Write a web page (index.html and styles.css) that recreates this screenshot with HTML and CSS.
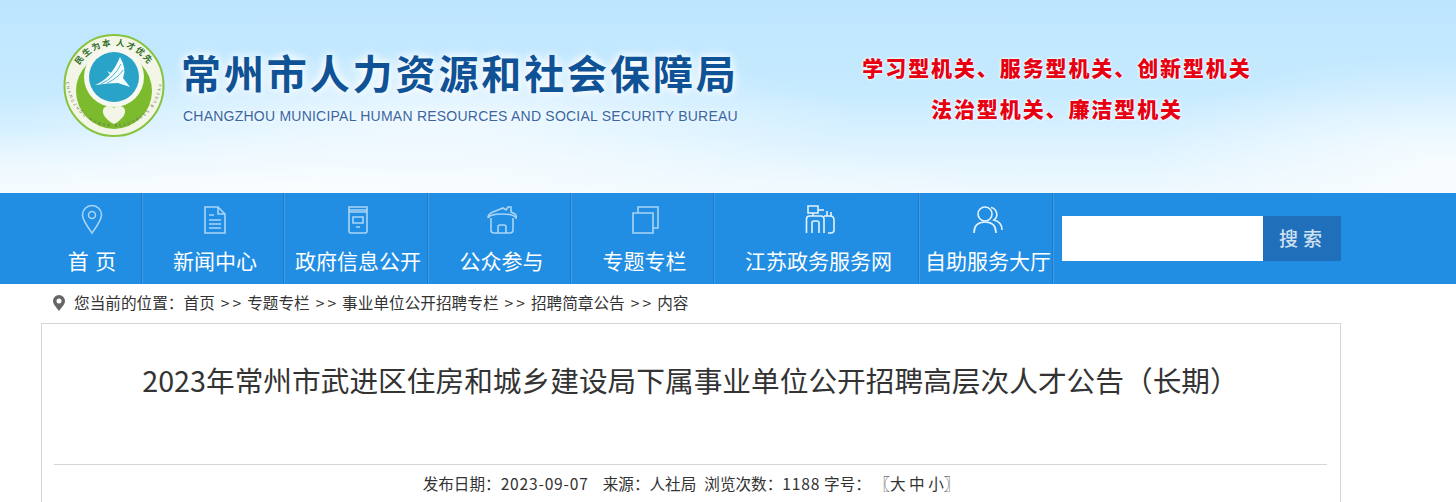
FILE: index.html
```html
<!DOCTYPE html>
<html lang="zh-CN">

<head>
  <meta charset="utf-8">
  <title>常州市人力资源和社会保障局</title>
  <link rel="stylesheet" href="styles.css">
</head>

<body>
  <header class="banner">
    <svg class="logo" viewBox="0 0 106 106" aria-hidden="true">
      <defs>
        <path id="logo-top" d="M13 52.500 A40 40 0 0 1 93 52.500" />
        <path id="logo-bottom" d="M5 46 A48 48 0 0 0 101 46" />
      </defs>
      <ellipse cx="53" cy="52.500" rx="49.500" ry="50.500" fill="#f3f6e6" stroke="#86c440" stroke-width="2" />
      <circle cx="53" cy="58" r="38" fill="#7dbb2e" />
      <circle cx="53" cy="44" r="30" fill="#f7f9f0" />
      <circle cx="53" cy="44" r="25" fill="#2aa3c8" />
      <path d="M34 52 Q50 46 59 24 Q66 36 62 45 L69 54 L57 50 Q47 50 34 52z" fill="#f4fbfd" />
      <path d="M46 38 L56 43 L53 46z" fill="#f4fbfd" />
      <path d="M40 51 Q53 45 60 31 M46 50 Q57 45 62 37" fill="none" stroke="#2aa3c8" stroke-width=".8" />
      <path d="M53 91 C45 87 41 81 42 77 C43 72 50 72 53 75 C56 72 63 72 64 77 C65 81 61 87 53 91z" fill="#f3f6e6" />
      <text class="logo-cn"><textPath href="#logo-top" startOffset="50%" text-anchor="middle">民生为本 人才优先</textPath></text>
      <text class="logo-en"><textPath href="#logo-bottom" startOffset="50%" text-anchor="middle">CHANGZHOU HUMAN RESOURCES BUREAU</textPath></text>
    </svg>
    <div class="brand">
      <div class="brand-cn">常州市人力资源和社会保障局</div>
      <div class="brand-en">CHANGZHOU MUNICIPAL HUMAN RESOURCES AND SOCIAL SECURITY BUREAU</div>
    </div>
    <div class="slogan">
      <div>学习型机关、服务型机关、创新型机关</div>
      <div>法治型机关、廉洁型机关</div>
    </div>
  </header>

  <nav class="nav">
    <a class="nav-item" href="#">
      <svg class="nav-icon" viewBox="0 0 32 32"><path d="M16 30 C11 23 6.500 17 6.500 12 A9.500 9.500 0 0 1 25.500 12 C25.500 17 21 23 16 30z" /><circle cx="16" cy="12" r="3.500" /></svg>
      <span>首 页</span>
    </a>
    <a class="nav-item" href="#">
      <svg class="nav-icon" viewBox="0 0 32 32"><path d="M6 4 H19 L26 11 V30 H6z M19 4 V11 H26 M10 12 H15 M10 17 H22 M10 21 H22 M10 25 H22" /></svg>
      <span>新闻中心</span>
    </a>
    <a class="nav-item" href="#">
      <svg class="nav-icon" viewBox="0 0 32 32"><path d="M7 4 H25 V28 Q25 30 23 30 H9 Q7 30 7 28z M7 7 H25 M7 9 H25 M11 14 H21 V20 H11z M14 24 H18" /></svg>
      <span>政府信息公开</span>
    </a>
    <a class="nav-item" href="#">
      <svg class="nav-icon" viewBox="0 0 32 32"><path d="M2 15 Q2 11 7 9 L17 5 L20 7 L22 4 H25 V9 L29 11 Q31 13 30 15 Q28 11 16 11 Q4 11 2 15z M5 15 V27 Q5 30 8 30 H24 Q27 30 27 27 V15 M12 30 V24 Q12 22 14 22 H18 Q20 22 20 24 V30" /></svg>
      <span>公众参与</span>
    </a>
    <a class="nav-item" href="#">
      <svg class="nav-icon" viewBox="0 0 32 32"><path d="M4 10 H24 V30 H4z M9 10 V4 H29 V25 H24" /></svg>
      <span>专题专栏</span>
    </a>
    <a class="nav-item" href="#">
      <svg class="nav-icon" viewBox="0 0 32 32"><path d="M5 3 H15 V10 H5z M10 10 V13 M3.500 30 V16 Q3.500 13 6.500 13 H18 Q21 13 21 16 V30 M9 30 V20 Q9 18 11 18 H14 Q16 18 16 20 V30 M15 7 H21 M21 13 H27 Q31 13 31 17 V27 Q31 30 28 30 H25 M24 13 V8 M28 13 V9" /></svg>
      <span>江苏政务服务网</span>
    </a>
    <a class="nav-item" href="#">
      <svg class="nav-icon" viewBox="0 0 32 32"><circle cx="13" cy="11" r="7" /><path d="M2 30 Q2 19 13 19 Q24 19 24 30 M19 4.500 A7 7 0 0 1 22 17 Q30 19 30 27" /></svg>
      <span>自助服务大厅</span>
    </a>
    <form class="search">
      <input class="search-input" type="text" aria-label="搜索">
      <button class="search-btn" type="button">搜索</button>
    </form>
  </nav>

  <div class="crumb">
    <svg class="crumb-pin" viewBox="0 0 14 16" aria-hidden="true"><path fill-rule="evenodd" d="M7 16 C4 12 1 9 1 6 A6 6 0 0 1 13 6 C13 9 10 12 7 16z M7 3.500 A2.500 2.500 0 1 0 7 8.500 A2.500 2.500 0 1 0 7 3.500z" /></svg>
    <span>您当前的位置：首页</span><span class="crumb-sep">&gt;&gt;</span><span>专题专栏</span><span class="crumb-sep">&gt;&gt;</span><span>事业单位公开招聘专栏</span><span class="crumb-sep">&gt;&gt;</span><span>招聘简章公告</span><span class="crumb-sep">&gt;&gt;</span><span>内容</span>
  </div>

  <main class="article">
    <h1 class="article-title">2023年常州市武进区住房和城乡建设局下属事业单位公开招聘高层次人才公告（长期）</h1>
    <div class="article-meta">
      <span>发布日期：<span class="num">2023-09-07</span></span>
      <span>来源：人社局</span>
      <span>浏览次数：<span class="num">1188</span></span>
      <span>字号： 〖大 中 小〗</span>
    </div>
  </main>
</body>

</html>
```

FILE: styles.css
```css
html,
body {
  height: 100%;
}

body {
  margin: 0;
  display: flex;
  flex-direction: column;
  overflow: hidden;
  background: #fff;
  color: #333;
  font-family: "Noto Sans CJK SC", "Liberation Sans", sans-serif;
}

a {
  color: inherit;
  text-decoration: none;
}

/* banner */
.banner {
  flex: none;
  height: 193px;
  display: flex;
  align-items: flex-start;
  box-sizing: border-box;
  padding-left: 61px;
  background:
    radial-gradient(ellipse 420px 70px at 440px 120px, rgba(255, 255, 255, .65), rgba(255, 255, 255, 0)),
    radial-gradient(ellipse 300px 110px at 1440px 165px, rgba(255, 255, 255, .7), rgba(255, 255, 255, 0)),
    radial-gradient(ellipse 700px 60px at 300px 185px, rgba(255, 255, 255, .7), rgba(255, 255, 255, 0)),
    linear-gradient(to bottom, #bde6fe 0, #c6eaff 90px, #dbf2ff 140px, #eff9fe 193px);
}

.logo {
  flex: none;
  width: 106px;
  height: 106px;
  margin-top: 33px;
}

.logo-cn {
  font-size: 8.500px;
  font-weight: 700;
  letter-spacing: 1.500px;
  fill: #2f6e2b;
}

.logo-en {
  font-size: 4px;
  letter-spacing: 2px;
  fill: #5f6f58;
}

.brand {
  flex: none;
  width: 592px;
  margin: 45px 0 0 14px;
}

.brand-cn {
  font-size: 40px;
  line-height: 54px;
  font-weight: 700;
  letter-spacing: 2.900px;
  white-space: nowrap;
  color: #0f5296;
  text-shadow: 0 0 8px #fff, 0 0 12px #fff;
}

.brand-en {
  margin: 7px 0 0 2px;
  font-family: "Liberation Sans", sans-serif;
  font-size: 14px;
  line-height: 20px;
  letter-spacing: .23px;
  white-space: nowrap;
  color: #3a679f;
  text-shadow: 0 0 5px #fff;
}

.slogan {
  flex: none;
  width: 390px;
  margin: 47px 0 0 89px;
  font-size: 21px;
  line-height: 41px;
  font-weight: 900;
  letter-spacing: 1.900px;
  white-space: nowrap;
  text-align: center;
  color: #e60012;
  text-shadow: 0 0 3px #fff, 0 0 3px #fff;
}

/* nav */
.nav {
  flex: none;
  height: 91px;
  display: flex;
  padding-left: 41px;
  background: #218ee4;
}

.nav-item {
  flex: none;
  box-sizing: border-box;
  display: flex;
  flex-direction: column;
  align-items: center;
  padding: 10px 0 0 5px;
  border-right: 1px solid #1f7bc9;
  box-shadow: 1px 0 0 #3f9de6;
  color: #fff;
  font-size: 21px;
  line-height: 30px;
  word-spacing: 2px;
  white-space: nowrap;
}

.nav-item:nth-of-type(1) { width: 101px; padding-left: 2px; }
.nav-item:nth-of-type(2) { width: 142px; }
.nav-item:nth-of-type(3) { width: 144px; }
.nav-item:nth-of-type(4) { width: 143px; }
.nav-item:nth-of-type(5) { width: 143px; }
.nav-item:nth-of-type(6) { width: 205px; }
.nav-item:nth-of-type(7) { width: 134px; }

.nav-icon {
  width: 32px;
  height: 32px;
  margin-bottom: 10px;
  fill: none;
  stroke: #a9d5f6;
  stroke-width: 1.600;
}

.nav-item:nth-of-type(6) .nav-icon,
.nav-item:nth-of-type(7) .nav-icon {
  stroke: #e6f3fd;
}

.search {
  display: flex;
  margin: 23px 0 0 9px;
  height: 45px;
}

.search-input {
  width: 201px;
  box-sizing: border-box;
  border: 0;
  padding: 0 8px;
  background: #fff;
}

.search-btn {
  width: 78px;
  border: 0;
  padding: 0 0 3px 2px;
  background: #1f6fbb;
  color: #cfe0f0;
  font: 500 19px "Noto Sans CJK SC", sans-serif;
  letter-spacing: 5px;
}

/* breadcrumb */
.crumb {
  flex: none;
  display: flex;
  align-items: center;
  height: 39px;
  box-sizing: border-box;
  padding: 0 0 2px 52px;
  font-size: 15.650px;
  color: #333;
  white-space: nowrap;
}

.crumb-pin {
  width: 14px;
  height: 16px;
  margin-right: 8px;
  fill: #666;
}

.crumb-sep {
  margin: 0 3px 0 6px;
  letter-spacing: 3px;
}

/* article */
.article {
  flex: 1;
  width: 1298px;
  margin-left: 41px;
  border: 1px solid #d6d6d6;
  border-bottom: 0;
}

.article-title {
  margin: 0 13px 0 12px;
  height: 141px;
  box-sizing: border-box;
  padding-top: 36px;
  border-bottom: 1px solid #d6d6d6;
  font-size: 28.700px;
  line-height: 40px;
  font-weight: 400;
  white-space: nowrap;
  text-align: center;
  color: #333;
}

.article-meta {
  display: flex;
  justify-content: center;
  gap: 6px;
  margin-top: 8px;
  font-size: 15.600px;
  line-height: 20px;
  color: #333;
}

.article-meta > span:nth-child(1) {
  margin-right: 8px;
}

.article-meta > span:nth-child(2) {
  margin-right: 2px;
}

.article-meta > span:nth-child(4) {
  margin-left: -2px;
}

.num {
  letter-spacing: .8px;
}
```
